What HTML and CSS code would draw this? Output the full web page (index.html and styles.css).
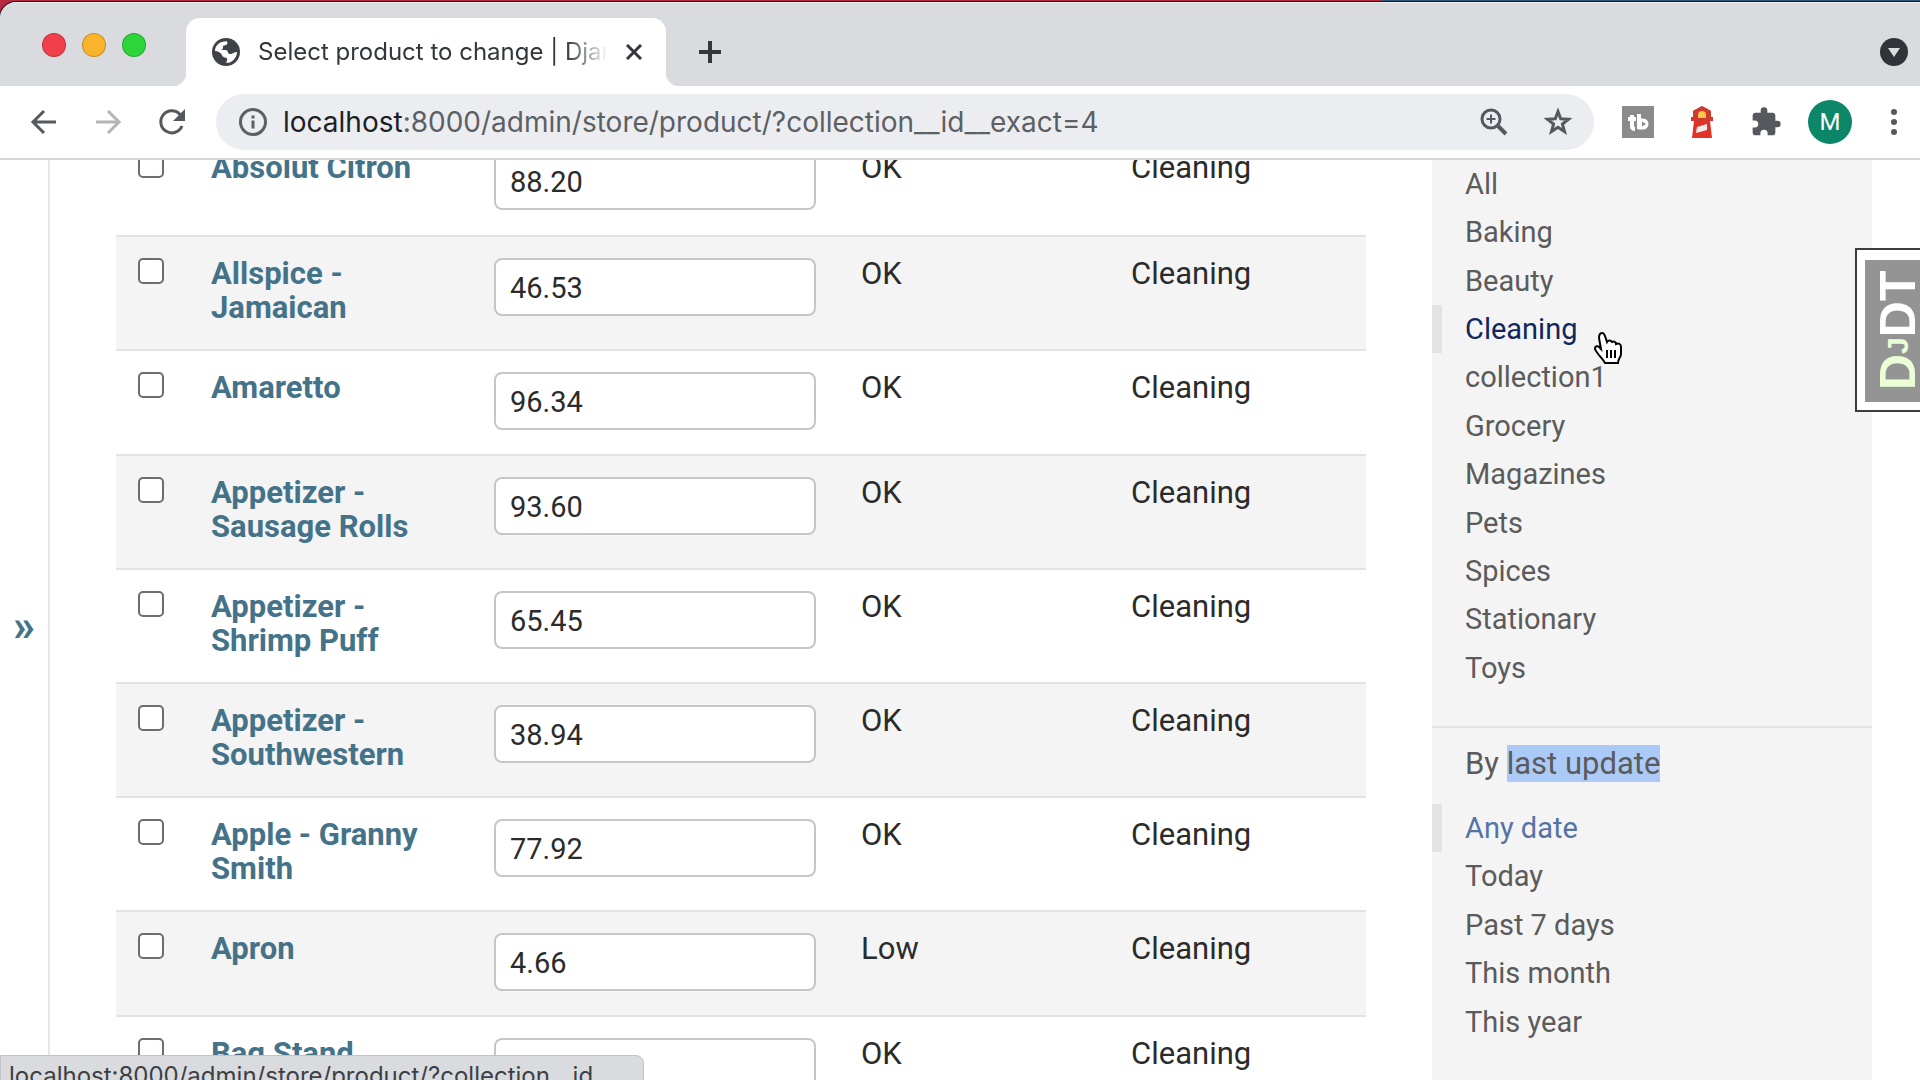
FILE: index.html
```html
<!DOCTYPE html>
<html lang="en">
<head>
<meta charset="utf-8">
<title>Select product to change | Django site admin</title>
<link rel="stylesheet" href="styles.css">
</head>
<body>
<div class="window">
  <header class="tabstrip">
    <div class="lights">
      <button class="light light-close" aria-label="Close window"></button>
      <button class="light light-min" aria-label="Minimize window"></button>
      <button class="light light-max" aria-label="Zoom window"></button>
    </div>
    <div class="tab">
      <svg class="favicon" viewBox="0 0 28 28"><circle cx="14" cy="14" r="14" fill="#3f4247"/><path d="M3 13C3 7 8 3 15 3.200C16 6 15 7 12 7.500C10 8 12 10 10 11.500L9 12H14C17 13 15 16 18 16C20 16.500 22 14 25 14C25 20 20 25 14.500 25C14 23 16 22 15 20.500C14 19 10 19.500 10 17C9 15 6 13 3 13Z" fill="#fff"/></svg>
      <span class="tab-title">Select product to change | Djan</span>
      <button class="icon-btn tab-close" aria-label="Close tab"><svg viewBox="0 0 16 16" width="16" height="16"><path d="M1 1l14 14M15 1L1 15" stroke="#33363a" stroke-width="3" fill="none"/></svg></button>
    </div>
    <button class="icon-btn strip-btn new-tab" aria-label="New tab"><svg viewBox="0 0 24 24" width="24" height="24"><path d="M12 1v22M1 12h22" stroke="#33363a" stroke-width="4"/></svg></button>
    <button class="icon-btn strip-btn tab-search" aria-label="Search tabs"><svg viewBox="0 0 28 28" width="28" height="28"><circle cx="14" cy="14" r="14" fill="#303338"/><path d="M8 10h12l-6 9z" fill="#dadbdf"/></svg></button>
  </header>

  <nav class="toolbar" aria-label="Browser toolbar">
    <div class="nav-buttons">
      <button class="icon-btn" aria-label="Back"><svg viewBox="0 0 28 28" width="28" height="28"><path d="M26 14H3M14 3L3 14l11 11" stroke="#55585c" stroke-width="3" fill="none"/></svg></button>
      <button class="icon-btn" aria-label="Forward" disabled><svg viewBox="0 0 28 28" width="28" height="28"><path d="M2 14h23M14 3l11 11-11 11" stroke="#b4b5b8" stroke-width="3" fill="none"/></svg></button>
      <button class="icon-btn" aria-label="Reload"><svg viewBox="0 0 28 28" width="28" height="28"><path d="M24 18A11 11 0 1 1 22 6.500L25 10" stroke="#55585c" stroke-width="3" fill="none"/><path d="M27 1v12H15z" fill="#55585c"/></svg></button>
    </div>
    <div class="omnibox">
      <svg class="site-info" viewBox="0 0 28 28" width="28" height="28"><circle cx="14" cy="14" r="12.500" stroke="#5c5f63" stroke-width="3" fill="none"/><path d="M14 12.500v8M14 7.500v3" stroke="#5c5f63" stroke-width="3"/></svg>
      <span class="url"><span class="host">localhost</span>:8000/admin/store/product/?collection__id__exact=4</span>
      <button class="icon-btn" aria-label="Zoom"><svg viewBox="0 0 28 28" width="28" height="28"><circle cx="11" cy="11" r="9" stroke="#55585c" stroke-width="3" fill="none"/><path d="M11 6.500v9M6.500 11h9" stroke="#55585c" stroke-width="2"/><path d="M17 17l9 9" stroke="#55585c" stroke-width="4"/></svg></button>
      <button class="icon-btn" aria-label="Bookmark this tab"><svg viewBox="0 0 30 30" width="30" height="30"><path d="M15 4.500l2.700 7.300 7.800.4-6.100 4.800 2.100 7.600L15 20.300l-6.500 4.300 2.100-7.600-6.100-4.800 7.800-.4z" stroke="#55585c" stroke-width="3" fill="none"/></svg></button>
    </div>
    <div class="extensions">
      <button class="icon-btn" aria-label="TubeBuddy"><svg viewBox="0 0 32 32" width="32" height="32"><path fill="#8b8b8b" d="M0 0h32v32H0z"/><path d="M10 9v11q0 3 3 3M6 13h8M17 8v15" stroke="#fff" stroke-width="4" fill="none"/><path d="M16 12.500h5a5.500 5.500 0 0 1 0 11h-5z" fill="#fff"/><path d="M20 15.500l4 2.500-4 2.500z" fill="#8b8b8b"/></svg></button>
      <button class="icon-btn" aria-label="Lighthouse"><svg viewBox="0 0 22 32" width="22" height="32"><path d="M2 5l9-5 9 5v6h2v4h-3l2 17H1l2-17H0v-4h2z" fill="#e03226"/><path d="M2 5l9-5 9 5v6h2v4H0v-4h2z" fill="#d03a2c"/><path d="M7 12V9a4 4 0 0 1 8 0v3z" fill="#fcc64a"/><path d="M6 21l10-3v6L5 27z" fill="#f4ecec"/></svg></button>
      <button class="icon-btn" aria-label="Extensions"><svg viewBox="0 0 24 24" width="32" height="32"><path fill="#55585c" d="M20.500 11H19V7c0-1.100-.9-2-2-2h-4V3.500a2.500 2.500 0 0 0-5 0V5H4c-1.100 0-2 .9-2 2v3.800h1.500a2.700 2.700 0 0 1 0 5.400H2V20c0 1.100.9 2 2 2h3.800v-1.500a2.700 2.700 0 0 1 5.400 0V22H17c1.100 0 2-.9 2-2v-4h1.500a2.500 2.500 0 0 0 0-5z"/></svg></button>
      <button class="avatar" aria-label="Profile">M</button>
      <button class="icon-btn" aria-label="Menu"><svg viewBox="0 0 8 28" width="8" height="28"><g fill="#55585c"><circle cx="4" cy="4" r="3"/><circle cx="4" cy="14" r="3"/><circle cx="4" cy="24" r="3"/></g></svg></button>
    </div>
  </nav>

  <div class="page">
    <button class="nav-toggle" aria-label="Toggle navigation">»</button>
    <main class="changelist">
      <table class="results">
        <colgroup><col class="col-check"><col class="col-title"><col class="col-price"><col class="col-stock"><col></colgroup>
        <tbody>
          <tr><td><input type="checkbox" aria-label="Select Absolut Citron"></td><th scope="row"><a href="#">Absolut Citron</a></th><td><input type="text" aria-label="Unit price of Absolut Citron" value="88.20"></td><td>OK</td><td>Cleaning</td></tr>
          <tr><td><input type="checkbox" aria-label="Select Allspice - Jamaican"></td><th scope="row"><a href="#">Allspice - Jamaican</a></th><td><input type="text" aria-label="Unit price of Allspice - Jamaican" value="46.53"></td><td>OK</td><td>Cleaning</td></tr>
          <tr><td><input type="checkbox" aria-label="Select Amaretto"></td><th scope="row"><a href="#">Amaretto</a></th><td><input type="text" aria-label="Unit price of Amaretto" value="96.34"></td><td>OK</td><td>Cleaning</td></tr>
          <tr><td><input type="checkbox" aria-label="Select Appetizer - Sausage Rolls"></td><th scope="row"><a href="#">Appetizer - Sausage Rolls</a></th><td><input type="text" aria-label="Unit price of Appetizer - Sausage Rolls" value="93.60"></td><td>OK</td><td>Cleaning</td></tr>
          <tr><td><input type="checkbox" aria-label="Select Appetizer - Shrimp Puff"></td><th scope="row"><a href="#">Appetizer - Shrimp Puff</a></th><td><input type="text" aria-label="Unit price of Appetizer - Shrimp Puff" value="65.45"></td><td>OK</td><td>Cleaning</td></tr>
          <tr><td><input type="checkbox" aria-label="Select Appetizer - Southwestern"></td><th scope="row"><a href="#">Appetizer - Southwestern</a></th><td><input type="text" aria-label="Unit price of Appetizer - Southwestern" value="38.94"></td><td>OK</td><td>Cleaning</td></tr>
          <tr><td><input type="checkbox" aria-label="Select Apple - Granny Smith"></td><th scope="row"><a href="#">Apple - Granny Smith</a></th><td><input type="text" aria-label="Unit price of Apple - Granny Smith" value="77.92"></td><td>OK</td><td>Cleaning</td></tr>
          <tr><td><input type="checkbox" aria-label="Select Apron"></td><th scope="row"><a href="#">Apron</a></th><td><input type="text" aria-label="Unit price of Apron" value="4.66"></td><td>Low</td><td>Cleaning</td></tr>
          <tr><td><input type="checkbox" aria-label="Select Bag Stand"></td><th scope="row"><a href="#">Bag Stand</a></th><td><input type="text" aria-label="Unit price of Bag Stand"></td><td>OK</td><td>Cleaning</td></tr>
        </tbody>
      </table>
      <aside class="filters">
        <ul class="by-collection">
          <li><a href="#">All</a></li>
          <li><a href="#">Baking</a></li>
          <li><a href="#">Beauty</a></li>
          <li class="selected hovered"><a href="#">Cleaning</a></li>
          <li><a href="#">collection1</a></li>
          <li><a href="#">Grocery</a></li>
          <li><a href="#">Magazines</a></li>
          <li><a href="#">Pets</a></li>
          <li><a href="#">Spices</a></li>
          <li><a href="#">Stationary</a></li>
          <li><a href="#">Toys</a></li>
        </ul>
        <h3>By <mark>last update</mark></h3>
        <ul class="by-date">
          <li class="selected"><a href="#">Any date</a></li>
          <li><a href="#">Today</a></li>
          <li><a href="#">Past 7 days</a></li>
          <li><a href="#">This month</a></li>
          <li><a href="#">This year</a></li>
        </ul>
      </aside>
    </main>
    <button class="djdt" aria-label="Show toolbar"><span class="djdt-label"><span class="dj">D<small>J</small></span>DT</span></button>
  </div>
  <div class="status">localhost:8000/admin/store/product/?collection__id</div>
  <svg class="cursor" viewBox="0 0 32 34" width="32" height="34"><path d="M8 3c2-2 4-1 5 2l2 6c1-2 4-2 5 0 2-1 4 0 4 2 3-1 5 0 5 3v7c0 3-3 5-3 9H13c-2-4-8-9-10-14 0-3 3-4 5-1l1 1L7 7c0-2 0-3 1-4z" fill="#fff" stroke="#000" stroke-width="2"/><path d="M15 19v8M19 19v8M23 19v8" stroke="#000" stroke-width="2"/></svg>
</div>
</body>
</html>
```
FILE: styles.css
```css
* { box-sizing: border-box; }

body {
  margin: 0;
  font-family: Roboto, "Liberation Sans", sans-serif;
  background: linear-gradient(90deg, #b8293f 0, #b8293f 72%, #2f5a7c 72%);
}

button { font: inherit; border: 0; padding: 0; background: none; }

.window {
  height: 100vh;
  padding-top: 2px;
  display: flex;
  flex-direction: column;
  overflow: hidden;
}

/* Tab strip */
.tabstrip {
  flex: none;
  display: flex;
  align-items: center;
  height: 84px;
  padding-right: 12px;
  background: #dadbdf;
  border-top: 1px solid #f1f1f4;
  border-radius: 16px 0 0 0;
  box-shadow: 0 0 0 1px #1b1220;
}
.lights { display: flex; gap: 16px; width: 186px; padding-left: 42px; }
.light { width: 24px; height: 24px; border-radius: 50%; border: 1px solid #0003; }
.light-close { background: #f23f4c; }
.light-min { background: #f9b32c; }
.light-max { background: #2dd43a; }
.tab {
  position: relative;
  align-self: flex-end;
  display: flex;
  align-items: center;
  width: 480px;
  height: 68px;
  padding: 0 24px 0 26px;
  background: #fff;
  border-radius: 14px 14px 0 0;
}
.tab::before, .tab::after {
  content: "";
  position: absolute;
  bottom: 0;
  width: 14px;
  height: 14px;
}
.tab::before { right: 100%; background: radial-gradient(circle at 0 0, #dadbdf 14px, #fff 15px); }
.tab::after { left: 100%; background: radial-gradient(circle at 100% 0, #dadbdf 14px, #fff 15px); }
.favicon { flex: none; width: 28px; height: 28px; margin-right: 18px; }
.tab-title {
  flex: 1;
  overflow: hidden;
  white-space: nowrap;
  font-family: Inter, Roboto, sans-serif;
  font-size: 24px;
  line-height: 36px;
  color: #33363a;
  -webkit-mask-image: linear-gradient(90deg, #000 88%, transparent);
  mask-image: linear-gradient(90deg, #000 88%, transparent);
}
.icon-btn { display: flex; flex: none; }
.tab-close { margin-left: 18px; }
.strip-btn { margin-top: 14px; }
.new-tab { margin-left: 32px; }
.tab-search { margin-left: auto; }

/* Toolbar */
.toolbar {
  flex: none;
  display: flex;
  align-items: center;
  height: 74px;
  padding: 0 22px 0 30px;
  background: #fff;
  border-bottom: 2px solid #d5d5d8;
}
.nav-buttons { display: flex; gap: 36px; width: 186px; }
.omnibox {
  flex: 1;
  display: flex;
  align-items: center;
  height: 56px;
  padding: 0 21px 0 23px;
  border-radius: 28px;
  background: #ecedf1;
}
.url {
  flex: 1;
  margin-left: 16px;
  font-family: Inter, Roboto, sans-serif;
  font-size: 28px;
  color: #5c5f63;
}
.host { color: #1d1f22; }
.omnibox .icon-btn { margin-left: 35px; }
.extensions { display: flex; align-items: center; margin-left: 28px; gap: 37px; }
.avatar {
  width: 44px;
  height: 44px;
  margin: 0 1px 0 -11px;
  border-radius: 50%;
  background: #0b8768;
  color: #fff;
  font-size: 24px;
}

/* Admin page */
.page { flex: 1; display: flex; min-height: 0; overflow: hidden; background: #fff; }
.nav-toggle {
  flex: none;
  width: 50px;
  padding-top: 12px;
  border-right: 2px solid #e6e6e6;
  color: #447389;
  font-size: 44px;
  font-weight: 700;
}
.changelist {
  flex: 1;
  display: flex;
  align-items: flex-start;
  gap: 66px;
  padding: 0 48px 0 66px;
}
.results {
  flex: 1;
  margin-top: -29px;
  table-layout: fixed;
  border-collapse: collapse;
  font-size: 31px;
  line-height: 34px;
  color: #2b2b2b;
}
.col-check { width: 77px; }
.col-title { width: 283px; }
.col-price { width: 367px; }
.col-stock { width: 270px; }
.results tr { height: 105px; background: #fff; border-bottom: 2px solid #e3e3e3; }
.results tr:nth-child(even) { background: #f4f4f4; }
.results td, .results th { padding: 20px 18px 24px; vertical-align: top; text-align: left; }
.results th { font-weight: 700; }
.results a { color: #447389; text-decoration: none; }
.results input { display: block; margin: 1px 0 0; appearance: none; background: #fff; }
.results input[type="checkbox"] {
  width: 26px;
  height: 26px;
  margin-left: 4px;
  border: 2px solid #6d6d6d;
  border-radius: 5px;
}
.results input[type="text"] {
  width: 322px;
  height: 58px;
  padding: 2px 14px 0;
  border: 2px solid #c6c6c6;
  border-radius: 8px;
  font: inherit;
  font-size: 29px;
  color: #2b2b2b;
}

.filters {
  flex: none;
  width: 440px;
  min-height: 100vh;
  background: #f4f4f4;
}
.filters ul { display: grid; margin: 0 0 34px; padding: 0; list-style: none; }
.by-collection { height: 532px; }
.by-date { height: 242px; }
.filters li {
  padding-left: 23px;
  border-left: 10px solid transparent;
  font-size: 29px;
  line-height: 48px;
}
.filters a { color: #5b5b5b; text-decoration: none; }
.filters .selected { border-color: #e3e3e3; }
.filters .selected a { color: #5373a5; }
.filters .hovered a { color: #10265c; }
.filters h3 {
  margin: 0;
  padding: 18px 33px 22px;
  border-top: 2px solid #e3e3e3;
  font-size: 31px;
  line-height: 36px;
  font-weight: 400;
  color: #5b5b5b;
}
.filters mark { background: #abcaf7; color: inherit; }

/* Debug toolbar handle */
.djdt {
  position: fixed;
  right: -21px;
  top: 248px;
  padding: 10px 8px 8px;
  border: 2px solid #3c3c3c;
  background: #fff;
}
.djdt-label {
  display: block;
  width: 66px;
  height: 142px;
  padding-top: 12px;
  background: #949494;
  color: #fff;
  font: 700 50px/66px "Liberation Sans", sans-serif;
  text-align: left;
  writing-mode: vertical-rl;
  transform: rotate(180deg);
}
.dj { color: #eaffd5; }
.dj small { font-size: 30px; }

.status {
  position: fixed;
  left: 0;
  top: calc(100vh - 25px);
  width: 644px;
  height: 40px;
  padding-left: 8px;
  border: 1px solid #c2c3c7;
  border-radius: 0 8px 0 0;
  background: #dadbdf;
  color: #3c4043;
  font-family: Inter, Roboto, sans-serif;
  font-size: 24px;
  line-height: 40px;
}
.cursor { position: fixed; left: 1592px; top: 331px; }
```
